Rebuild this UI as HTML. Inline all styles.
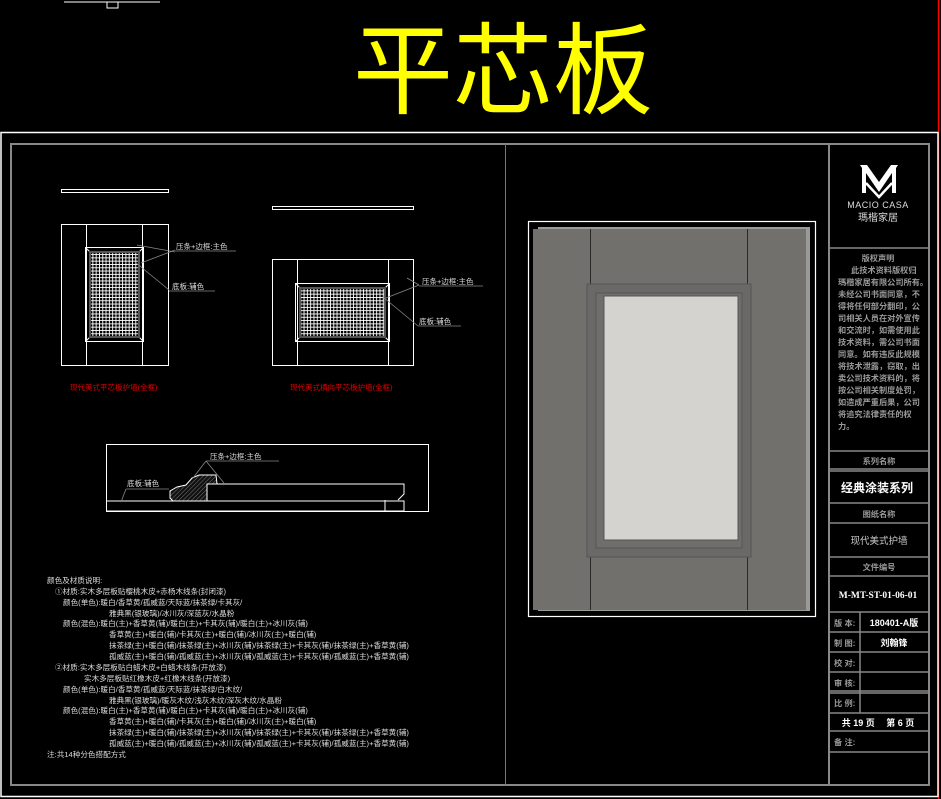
<!DOCTYPE html>
<html><head><meta charset="utf-8"><style>
html,body{margin:0;padding:0;background:#000;}
body{width:941px;height:799px;overflow:hidden;position:relative;font-family:"Liberation Sans","Noto Sans CJK SC",sans-serif;}
svg{position:absolute;left:0;top:0;}
</style></head><body>
<svg width="941" height="799" viewBox="0 0 941 799" xmlns="http://www.w3.org/2000/svg" font-family="Liberation Sans, Noto Sans CJK SC, sans-serif">
<!-- top marks -->
<line x1="64" y1="2" x2="160" y2="2" stroke="#fff" stroke-width="1"/>
<rect x="107" y="2" width="11" height="6" fill="none" stroke="#fff"/>
<text x="503" y="106" font-size="100" fill="#ffff00" text-anchor="middle" font-family="Noto Sans CJK SC, sans-serif">平芯板</text>
<!-- red right line -->
<line x1="938.5" y1="0" x2="938.5" y2="799" stroke="#f00" stroke-width="1.5"/>
<!-- outer white frame -->
<rect x="1" y="132.5" width="937" height="664" fill="none" stroke="#fff" stroke-width="1.5"/>
<!-- inner gray frame -->
<rect x="11" y="144" width="918" height="641" fill="none" stroke="#888" stroke-width="2"/>
<line x1="505.5" y1="144" x2="505.5" y2="785" stroke="#777" stroke-width="1"/>
<line x1="829" y1="144" x2="829" y2="785" stroke="#888" stroke-width="2"/>

<!-- title block -->
<g stroke="#888" stroke-width="1.5">
<line x1="829" y1="248" x2="929" y2="248"/>
<line x1="829" y1="451" x2="929" y2="451"/>
<line x1="829" y1="469" x2="929" y2="469"/>
<line x1="829" y1="471" x2="929" y2="471"/>
<line x1="829" y1="503" x2="929" y2="503"/>
<line x1="829" y1="523" x2="929" y2="523"/>
<line x1="829" y1="557" x2="929" y2="557"/>
<line x1="829" y1="576" x2="929" y2="576"/>
<line x1="829" y1="612" x2="929" y2="612"/>
<line x1="829" y1="632" x2="929" y2="632"/>
<line x1="829" y1="652" x2="929" y2="652"/>
<line x1="829" y1="672" x2="929" y2="672"/>
<line x1="829" y1="691" x2="929" y2="691"/>
<line x1="829" y1="693" x2="929" y2="693"/>
<line x1="829" y1="713" x2="929" y2="713"/>
<line x1="829" y1="731" x2="929" y2="731"/>
<line x1="829" y1="752" x2="929" y2="752"/>
<line x1="860" y1="612" x2="860" y2="713"/>
</g>
<!-- logo -->
<path d="M860 165 L867 165 L879 182 L891 165 L898 165 L896 168 L896 193 L892 193 L892 173 L879 192 L866 173 L866 193 L862 193 L862 168 Z" fill="#fff"/>
<path d="M866 183 L879 197 L892 183" fill="none" stroke="#fff" stroke-width="2.5"/>
<text x="878" y="208" font-size="9" fill="#ddd" text-anchor="middle" letter-spacing="0.5">MACIO CASA</text>
<text x="878" y="221" font-size="10" fill="#ddd" text-anchor="middle">瑪楷家居</text>
<g font-size="8.2" fill="#999" font-weight="bold">
<text x="878" y="261" text-anchor="middle">版权声明</text>
<text x="851" y="273">此技术资料版权归</text>
<text x="838" y="285">瑪楷家居有限公司所有。</text>
<text x="838" y="297">未经公司书面同意，不</text>
<text x="838" y="309">得将任何部分翻印，公</text>
<text x="838" y="321">司相关人员在对外宣传</text>
<text x="838" y="333">和交流时，如需使用此</text>
<text x="838" y="345">技术资料，需公司书面</text>
<text x="838" y="357">同意。如有违反此规模</text>
<text x="838" y="369">将技术泄露，窃取，出</text>
<text x="838" y="381">卖公司技术资料的，将</text>
<text x="838" y="393">按公司相关制度处罚，</text>
<text x="838" y="405">如造成严重后果，公司</text>
<text x="838" y="417">将追究法律责任的权</text>
<text x="838" y="429">力。</text>
<text x="879" y="464" text-anchor="middle">系列名称</text>
<text x="879" y="517" text-anchor="middle">图纸名称</text>
<text x="879" y="570" text-anchor="middle">文件编号</text>
<text x="834" y="626">版 本:</text>
<text x="834" y="646">制 图:</text>
<text x="834" y="666">校 对:</text>
<text x="834" y="686">审 核:</text>
<text x="834" y="706">比 例:</text>
<text x="834" y="745">备 注:</text>
</g>
<text x="877" y="492" font-size="12" fill="#fff" font-weight="bold" text-anchor="middle">经典涂装系列</text>
<text x="879" y="544" font-size="9.5" fill="#ccc" text-anchor="middle">现代美式护墙</text>
<text x="878" y="598" font-size="9.5" fill="#fff" font-weight="bold" text-anchor="middle" font-family="Liberation Serif, serif">M-MT-ST-01-06-01</text>
<text x="894" y="626" font-size="9" fill="#fff" text-anchor="middle" font-weight="bold">180401-A版</text>
<text x="894" y="646" font-size="9" fill="#fff" text-anchor="middle" font-weight="bold">刘翰锋</text>
<text x="878" y="726" font-size="9" fill="#fff" text-anchor="middle" font-weight="bold">共 19 页　 第 6 页</text>

<!-- door image -->
<rect x="528.5" y="221.5" width="287" height="395" fill="none" stroke="#fff" stroke-width="1.2"/>
<rect x="538" y="227" width="272" height="384" fill="#9a9a96"/>
<rect x="533" y="229" width="273" height="381" fill="#72706d"/>
<line x1="590.5" y1="229" x2="590.5" y2="610" stroke="#2a2a2a"/>
<line x1="747.5" y1="229" x2="747.5" y2="610" stroke="#2a2a2a"/>
<rect x="587" y="284" width="164" height="273" fill="#6a6967" stroke="#555"/>
<rect x="596" y="293" width="146" height="255" fill="#6f6e6b" stroke="#555"/>
<rect x="604" y="296" width="134" height="244" fill="#d4d3cf" stroke="#555"/>

<!-- left elevation -->
<g stroke="#fff" stroke-width="1" fill="none">
<rect x="61.5" y="224.5" width="107" height="141"/>
<line x1="86.5" y1="224" x2="86.5" y2="365"/>
<line x1="142.5" y1="224" x2="142.5" y2="365"/>
<rect x="85.5" y="247.5" width="58" height="94"/>
<line x1="86" y1="248" x2="90" y2="252"/><line x1="143" y1="248" x2="139" y2="252"/>
<line x1="86" y1="341" x2="90" y2="337"/><line x1="143" y1="341" x2="139" y2="337"/>
<rect x="61.5" y="189.5" width="107" height="3"/>
<!-- right elevation -->
<rect x="272.5" y="259.5" width="141" height="106"/>
<line x1="297.5" y1="259" x2="297.5" y2="365"/>
<line x1="388.5" y1="259" x2="388.5" y2="365"/>
<rect x="295.5" y="283.5" width="94" height="58"/>
<line x1="296" y1="284" x2="300" y2="288"/><line x1="389" y1="284" x2="385" y2="288"/>
<line x1="296" y1="341" x2="300" y2="337"/><line x1="389" y1="341" x2="385" y2="337"/>
<rect x="272.5" y="206.5" width="141" height="3"/>
</g>
<defs>
<pattern id="g" width="3.3" height="3.3" patternUnits="userSpaceOnUse"><rect width="3.3" height="3.3" fill="#fff"/><rect x="0.9" y="0.9" width="2.4" height="2.4" fill="#000"/></pattern>
<pattern id="h" width="3" height="3" patternUnits="userSpaceOnUse" patternTransform="rotate(45)"><rect width="3" height="3" fill="#111"/><line x1="0" y1="0" x2="0" y2="3" stroke="#777"/></pattern>
</defs>
<rect x="89" y="251" width="51" height="87" fill="#555"/>
<rect x="91" y="253" width="47" height="83" fill="url(#g)"/>
<rect x="299" y="287" width="87" height="51" fill="#555"/>
<rect x="301" y="289" width="83" height="47" fill="url(#g)"/>
<g stroke="#888" stroke-width="0.8">
<line x1="137" y1="245" x2="175" y2="252"/><line x1="141" y1="263" x2="175" y2="250"/><line x1="175" y1="251" x2="236" y2="251"/>
<line x1="135" y1="262" x2="169" y2="290"/><line x1="169" y1="291" x2="215" y2="291"/>
<line x1="407" y1="278" x2="419" y2="285"/><line x1="386" y1="298" x2="419" y2="285"/><line x1="419" y1="286" x2="483" y2="286"/>
<line x1="383" y1="297" x2="418" y2="326"/><line x1="418" y1="326" x2="461" y2="326"/>
</g>
<g font-size="7.5" fill="#ddd">
<text x="176" y="249">压条+边框:主色</text>
<text x="172" y="289">底板:辅色</text>
<text x="422" y="284">压条+边框:主色</text>
<text x="419" y="324">底板:辅色</text>
</g>
<g font-size="7.5" fill="#e00000">
<text x="70" y="390">现代美式平芯板护墙(全框)</text>
<text x="290" y="390">现代美式横向平芯板护墙(全框)</text>
</g>

<!-- section -->
<rect x="106.5" y="444.5" width="322" height="67" fill="none" stroke="#fff"/>
<path d="M107 501 L404 501 L404 511 L107 511" fill="none" stroke="#fff"/>
<path d="M207 501 L207 484 L404 484 L404 494 L398 500" fill="none" stroke="#fff"/>
<path d="M385 500 L385 511 L404 511 L404 502" fill="none" stroke="#fff"/>
<path d="M173 501 L170 498 L170 491 L177 487 L186 485 L192 478 L199 475 L216 475 L217 484 L207 484 L207 501 Z" fill="url(#h)" stroke="#fff"/>
<g stroke="#888" stroke-width="0.8">
<line x1="206" y1="461" x2="279" y2="461"/><line x1="206" y1="461" x2="193" y2="478"/><line x1="206" y1="461" x2="224" y2="483"/>
<line x1="126" y1="489" x2="169" y2="489"/><line x1="126" y1="489" x2="121" y2="502"/>
</g>
<g font-size="7.5" fill="#ddd">
<text x="210" y="459">压条+边框:主色</text>
<text x="127" y="486">底板:辅色</text>
</g>

<!-- description text -->
<g font-size="7.6" fill="#ddd">
<text x="47" y="583">颜色及材质说明:</text>
<text x="55" y="594">①材质:实木多层板贴樱桃木皮+赤杨木线条(封闭漆)</text>
<text x="63" y="605">颜色(单色):暖白/香草黄/孤威蓝/天际蓝/抹茶绿/卡其灰/</text>
<text x="109" y="616">雅典黑(银玻璃)/冰川灰/深蓝灰/水晶粉</text>
<text x="63" y="626">颜色(混色):暖白(主)+香草黄(辅)/暖白(主)+卡其灰(辅)/暖白(主)+冰川灰(辅)</text>
<text x="109" y="637">香草黄(主)+暖白(辅)/卡其灰(主)+暖白(辅)/冰川灰(主)+暖白(辅)</text>
<text x="109" y="648">抹茶绿(主)+暖白(辅)/抹茶绿(主)+冰川灰(辅)/抹茶绿(主)+卡其灰(辅)/抹茶绿(主)+香草黄(辅)</text>
<text x="109" y="659">孤威蓝(主)+暖白(辅)/孤威蓝(主)+冰川灰(辅)/孤威蓝(主)+卡其灰(辅)/孤威蓝(主)+香草黄(辅)</text>
<text x="55" y="670">②材质:实木多层板贴白蜡木皮+白蜡木线条(开放漆)</text>
<text x="84" y="681">实木多层板贴红橡木皮+红橡木线条(开放漆)</text>
<text x="63" y="692">颜色(单色):暖白/香草黄/孤威蓝/天际蓝/抹茶绿/白木纹/</text>
<text x="109" y="703">雅典黑(银玻璃)/暖灰木纹/浅灰木纹/深灰木纹/水晶粉</text>
<text x="63" y="713">颜色(混色):暖白(主)+香草黄(辅)/暖白(主)+卡其灰(辅)/暖白(主)+冰川灰(辅)</text>
<text x="109" y="724">香草黄(主)+暖白(辅)/卡其灰(主)+暖白(辅)/冰川灰(主)+暖白(辅)</text>
<text x="109" y="735">抹茶绿(主)+暖白(辅)/抹茶绿(主)+冰川灰(辅)/抹茶绿(主)+卡其灰(辅)/抹茶绿(主)+香草黄(辅)</text>
<text x="109" y="746">孤威蓝(主)+暖白(辅)/孤威蓝(主)+冰川灰(辅)/孤威蓝(主)+卡其灰(辅)/孤威蓝(主)+香草黄(辅)</text>
<text x="47" y="757">注:共14种分色搭配方式</text>
</g>
</svg>
</body></html>
